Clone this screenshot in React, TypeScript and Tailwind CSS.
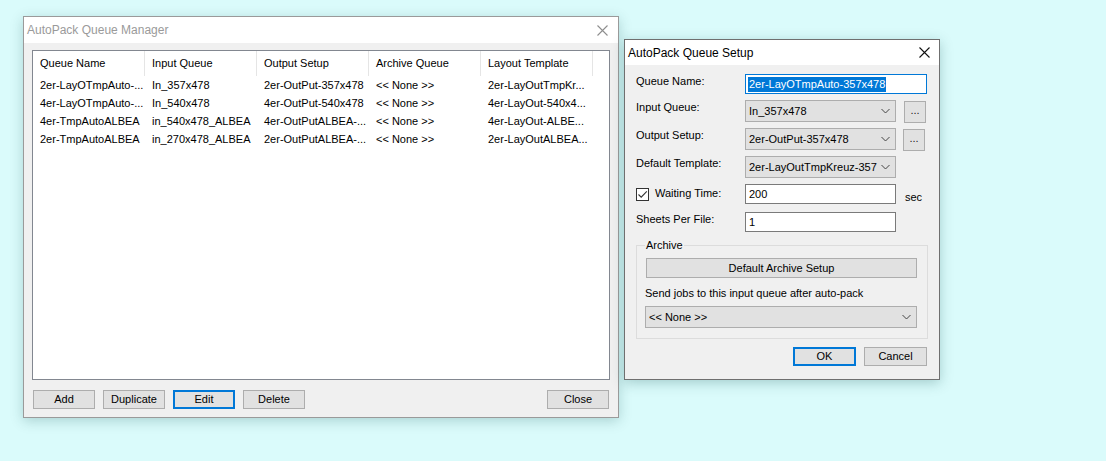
import React from "react";

const FONT = { fontFamily: '"Liberation Sans", Arial, sans-serif' };

const columns = ["Queue Name", "Input Queue", "Output Setup", "Archive Queue", "Layout Template"];

const rows = [
  ["2er-LayOTmpAuto-...", "In_357x478", "2er-OutPut-357x478", "<< None >>", "2er-LayOutTmpKr..."],
  ["4er-LayOTmpAuto-...", "In_540x478", "4er-OutPut-540x478", "<< None >>", "4er-LayOut-540x4..."],
  ["4er-TmpAutoALBEA", "in_540x478_ALBEA", "4er-OutPutALBEA-...", "<< None >>", "4er-LayOut-ALBE..."],
  ["2er-TmpAutoALBEA", "in_270x478_ALBEA", "2er-OutPutALBEA-...", "<< None >>", "2er-LayOutALBEA..."],
];

const CloseX: React.FC<{ color: string }> = ({ color }) => (
  <svg width="11" height="11" viewBox="0 0 11 11">
    <path d="M0.5 0.5 L10.5 10.5 M10.5 0.5 L0.5 10.5" stroke={color} strokeWidth="1.1" fill="none" />
  </svg>
);

const Chevron = () => (
  <svg width="9" height="6" viewBox="0 0 9 6" className="shrink-0">
    <path d="M0.5 1 L4.5 5 L8.5 1" stroke="#444" strokeWidth="1" fill="none" />
  </svg>
);

interface BtnProps {
  label: string;
  w: string;
  primary?: boolean;
}

const WinButton: React.FC<BtnProps> = ({ label, w, primary }) => (
  <button
    className={`${w} h-[19px] flex items-center justify-center bg-[#e1e1e1] text-black ${
      primary ? "border-2 border-[#0078d7]" : "border border-[#adadad]"
    }`}
  >
    {label}
  </button>
);

const Combo: React.FC<{ value: string; w: string }> = ({ value, w }) => (
  <div className={`${w} h-[22px] flex items-center bg-[#e1e1e1] border border-[#adadad] pl-[3px] pr-[5px] gap-1`}>
    <span className="flex-1 overflow-hidden whitespace-nowrap">{value}</span>
    <Chevron />
  </div>
);

const DotsButton = () => (
  <div className="w-[22px] h-[22px] flex items-center justify-center bg-[#e1e1e1] border border-[#adadad] text-[#222] pb-[3px]">
    ...
  </div>
);

const Label: React.FC<{ text: string }> = ({ text }) => (
  <div className="w-[109px] shrink-0 leading-[14px] text-black">{text}</div>
);

const QueueManager = () => (
  <div className="absolute left-[23px] top-[16px] w-[596px] h-[402px] border border-[#9a9a9a] bg-[#f0f0f0] flex flex-col shadow-[0_3px_12px_rgba(0,70,70,0.22)]">
    <div className="h-[26px] bg-white flex items-center justify-between pl-[3px] pr-[10px]">
      <span className="text-[12px] text-[#9a9a9a]">AutoPack Queue Manager</span>
      <CloseX color="#8e8e8e" />
    </div>
    <div className="flex-1 flex flex-col pt-[7px] px-[8px] pb-[8px]">
      <div className="h-[330px] bg-white border border-[#828790] flex flex-col">
        <div className="h-[25px] flex">
          {columns.map((c) => (
            <div key={c} className="w-[112px] border-r border-[#e5e5e5] pl-[7px] flex items-center text-black">
              {c}
            </div>
          ))}
        </div>
        {rows.map((r, i) => (
          <div key={i} className="h-[18px] flex items-center">
            {r.map((cell, j) => (
              <div key={j} className="w-[112px] pl-[7px] whitespace-nowrap overflow-hidden text-black">
                {cell}
              </div>
            ))}
          </div>
        ))}
      </div>
      <div className="mt-[10px] flex items-center gap-[8px] px-[1px]">
        <WinButton label="Add" w="w-[62px]" />
        <WinButton label="Duplicate" w="w-[62px]" />
        <WinButton label="Edit" w="w-[62px]" primary />
        <WinButton label="Delete" w="w-[62px]" />
        <div className="flex-1" />
        <WinButton label="Close" w="w-[62px]" />
      </div>
    </div>
  </div>
);

const QueueSetup = () => (
  <div className="absolute left-[624px] top-[39px] w-[316px] h-[341px] border border-[#6f6f6f] bg-[#f0f0f0] flex flex-col shadow-[0_3px_12px_rgba(0,70,70,0.25)]">
    <div className="h-[25px] bg-white flex items-center justify-between pl-[3px] pr-[9px]">
      <span className="text-[12px] text-black">AutoPack Queue Setup</span>
      <CloseX color="#111" />
    </div>
    <div className="flex-1 flex flex-col pl-[11px] pr-[12px]">
      <div className="mt-[9px] h-[20px] flex">
        <Label text="Queue Name:" />
        <div className="w-[182px] h-[20px] bg-white border border-[#0078d7] flex items-center pl-[2px]">
          <span className="bg-[#0078d7] text-white leading-[15px] px-[1px]">2er-LayOTmpAuto-357x478</span>
        </div>
      </div>
      <div className="mt-[6px] h-[22px] flex">
        <Label text="Input Queue:" />
        <Combo value="In_357x478" w="w-[151px]" />
        <div className="ml-[8px] mt-[1px]">
          <DotsButton />
        </div>
      </div>
      <div className="mt-[6px] h-[22px] flex">
        <Label text="Output Setup:" />
        <Combo value="2er-OutPut-357x478" w="w-[151px]" />
        <div className="ml-[7px] mt-[1px]">
          <DotsButton />
        </div>
      </div>
      <div className="mt-[6px] h-[22px] flex">
        <Label text="Default Template:" />
        <Combo value="2er-LayOutTmpKreuz-357" w="w-[151px]" />
      </div>
      <div className="mt-[6px] h-[20px] flex">
        <div className="w-[109px] shrink-0 flex items-start pt-[4px] gap-[6px]">
          <div className="w-[13px] h-[13px] bg-white border border-[#333] flex items-center justify-center">
            <svg width="11" height="11" viewBox="0 0 11 11">
              <path d="M1.5 5.5 L4.2 8.2 L9.8 2.3" stroke="#333" strokeWidth="1.1" fill="none" />
            </svg>
          </div>
          <span className="leading-[11px] text-black">Waiting Time:</span>
        </div>
        <div className="w-[151px] h-[20px] bg-white border border-[#7a7a7a] flex items-center pl-[3px] text-black">200</div>
        <span className="ml-[9px] mt-[7px] leading-[13px] text-black">sec</span>
      </div>
      <div className="mt-[8px] h-[20px] flex">
        <Label text="Sheets Per File:" />
        <div className="w-[151px] h-[20px] bg-white border border-[#7a7a7a] flex items-center pl-[3px] text-black">1</div>
      </div>
      <fieldset className="mt-[6px] w-[292px] border border-[#dcdcdc] pb-[10px] flex flex-col">
        <legend className="ml-[8px] px-[1px] leading-[14px] text-black">Archive</legend>
        <div className="mt-[6px] ml-[9px] w-[271px] h-[20px] bg-[#e1e1e1] border border-[#adadad] flex items-center justify-center text-black">
          Default Archive Setup
        </div>
        <div className="mt-[8px] ml-[8px] leading-[14px] text-black">Send jobs to this input queue after auto-pack</div>
        <div className="mt-[6px] ml-[8px]">
          <Combo value="<< None >>" w="w-[272px]" />
        </div>
      </fieldset>
      <div className="mt-[8px] flex justify-end gap-[8px]">
        <WinButton label="OK" w="w-[63px]" primary />
        <WinButton label="Cancel" w="w-[63px]" />
      </div>
    </div>
  </div>
);

export default function App() {
  return (
    <div className="relative w-[1106px] h-[461px] bg-[#dafbfb] text-[11px] overflow-hidden" style={FONT}>
      <QueueManager />
      <QueueSetup />
    </div>
  );
}
